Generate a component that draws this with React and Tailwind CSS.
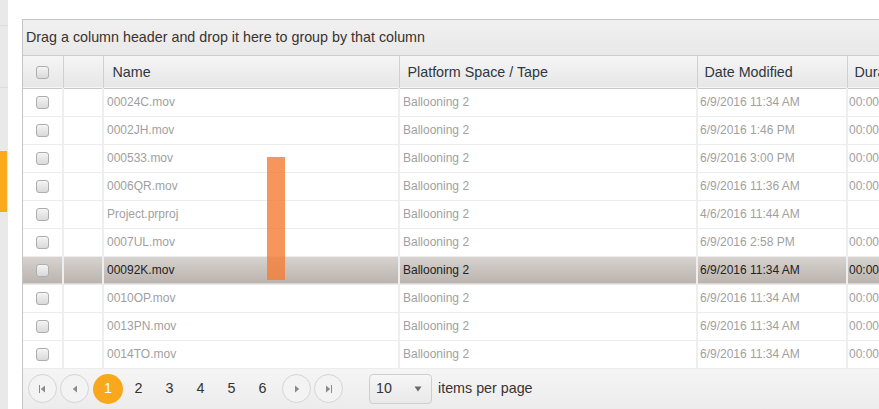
import React from "react";

const rows = [
  { name: "00024C.mov", date: "6/9/2016 11:34 AM", dur: "00:00:12" },
  { name: "0002JH.mov", date: "6/9/2016 1:46 PM", dur: "00:00:15" },
  { name: "000533.mov", date: "6/9/2016 3:00 PM", dur: "00:00:09" },
  { name: "0006QR.mov", date: "6/9/2016 11:36 AM", dur: "00:00:21" },
  { name: "Project.prproj", date: "4/6/2016 11:44 AM", dur: "" },
  { name: "0007UL.mov", date: "6/9/2016 2:58 PM", dur: "00:00:18" },
  { name: "00092K.mov", date: "6/9/2016 11:34 AM", dur: "00:00:11", selected: true },
  { name: "0010OP.mov", date: "6/9/2016 11:34 AM", dur: "00:00:14" },
  { name: "0013PN.mov", date: "6/9/2016 11:34 AM", dur: "00:00:10" },
  { name: "0014TO.mov", date: "6/9/2016 11:34 AM", dur: "00:00:16" },
];

function Check() {
  return (
    <span className="inline-block w-[13px] h-[13px] rounded-[3px] border border-[#aeaeae] bg-gradient-to-b from-[#f4f4f4] to-[#d9d9d9] align-middle" />
  );
}

function PageBtn({ children }) {
  return (
    <button className="w-[29px] h-[29px] rounded-full border border-[#d5d5d5] bg-[#f3f3f3] flex items-center justify-center">
      {children}
    </button>
  );
}

const Tri = ({ dir }) => (
  <svg width="6" height="8" viewBox="0 0 6 8">
    {dir === "l" ? <path d="M5 0.5 L0.8 4 L5 7.5 Z" fill="#8a8a8a" /> : <path d="M1 0.5 L5.2 4 L1 7.5 Z" fill="#8a8a8a" />}
  </svg>
);

const Bar = () => <span className="inline-block w-[1.5px] h-[8px] bg-[#8a8a8a]" />;

export default function App() {
  return (
    <div className="w-[879px] h-[409px] overflow-hidden flex bg-white font-['Liberation_Sans',Arial,sans-serif]">
      <div className="w-[8px] shrink-0 bg-[#e9e9e9] flex flex-col">
        <div className="h-[26px] border-b border-[#dcdcdc]" />
        <div className="h-[62px] border-b border-[#dcdcdc]" />
        <div className="h-[63px]" />
        <div className="h-[61px] w-[7px] bg-[#f9aa1c]" />
      </div>
      <div className="pl-[14px] pt-[19px] shrink-0">
        <div className="relative w-[900px] border border-[#c5c5c5]">
          <div className="h-[36px] border-b border-[#cdcdcd] bg-gradient-to-b from-[#f0f0f0] to-[#e9e9e9] flex items-center pl-[3px] pt-[1px] text-[14.3px] text-[#3a3230]">
            Drag a column header and drop it here to group by that column
          </div>
          <table className="table-fixed border-collapse w-[900px]">
            <colgroup>
              <col className="w-[40px]" />
              <col className="w-[40px]" />
              <col className="w-[296px]" />
              <col className="w-[298px]" />
              <col className="w-[150px]" />
              <col className="w-[76px]" />
            </colgroup>
            <thead>
              <tr className="h-[32px] bg-gradient-to-b from-[#f6f6f6] to-[#e6e6e6] border-b border-[#c8c8c8] text-[14.3px] text-[#2f3640]">
                <th className="border-r border-[#d0d0d0] text-center font-normal"><Check /></th>
                <th className="border-r border-[#d0d0d0] font-normal" />
                <th className="border-r border-[#d0d0d0] text-left font-normal pl-[9px] pt-[1px]">Name</th>
                <th className="border-r border-[#d0d0d0] text-left font-normal pl-[8px] pt-[1px]">Platform Space / Tape</th>
                <th className="border-r border-[#d0d0d0] text-left font-normal pl-[7px] pt-[1px]">Date Modified</th>
                <th className="text-left font-normal pl-[7px] pt-[1px] whitespace-nowrap">Duration</th>
              </tr>
            </thead>
            <tbody>
              {rows.map((r) => (
                <tr
                  key={r.name}
                  className={`h-[28px] border-b border-[#ececec] text-[12px] ${
                    r.selected ? "bg-gradient-to-b from-[#d9d4d1] to-[#bab3ae] text-[#222]" : "text-[#9f9f9f]"
                  }`}
                >
                  <td className="border-r-2 border-[#eeeeee] text-center"><Check /></td>
                  <td className="border-r-2 border-[#eeeeee]" />
                  <td className="border-r-2 border-[#eeeeee] pl-[3px]">{r.name}</td>
                  <td className="border-r-2 border-[#eeeeee] pl-[3px]">Ballooning 2</td>
                  <td className="border-r-2 border-[#eeeeee] pl-[2px]">{r.date}</td>
                  <td className="pl-[1px] whitespace-nowrap">{r.dur}</td>
                </tr>
              ))}
            </tbody>
          </table>
          <div className="h-[40px] bg-gradient-to-b from-[#f5f5f5] to-[#ececec] flex items-center pl-[5px] text-[14.3px] text-[#333]">
            <PageBtn><Bar /><Tri dir="l" /></PageBtn>
            <div className="w-[3px]" />
            <PageBtn><Tri dir="l" /></PageBtn>
            <div className="w-[4px]" />
            <span className="w-[30px] h-[30px] rounded-full bg-[#f8a81c] text-white flex items-center justify-center">1</span>
            <span className="w-[31px] text-center">2</span>
            <span className="w-[31px] text-center">3</span>
            <span className="w-[31px] text-center">4</span>
            <span className="w-[31px] text-center">5</span>
            <span className="w-[31px] text-center">6</span>
            <div className="w-[4px]" />
            <PageBtn><Tri dir="r" /></PageBtn>
            <div className="w-[3px]" />
            <PageBtn><Tri dir="r" /><Bar /></PageBtn>
            <div className="w-[26px]" />
            <div className="w-[63px] h-[30px] rounded-[4px] border border-[#cfcfcf] bg-gradient-to-b from-[#f6f6f6] to-[#e9e9e9] flex items-center justify-between pl-[6px] pr-[9px]">
              <span>10</span>
              <svg width="8" height="6" viewBox="0 0 8 6"><path d="M0.5 0.5 H7.5 L4 5.5 Z" fill="#6a6a6a" /></svg>
            </div>
            <span className="ml-[6px] text-[#3a3230]">items per page</span>
          </div>
          <div className="absolute left-[244px] top-[137px] w-[18px] h-[123px] bg-[rgba(244,124,52,0.8)]" />
        </div>
      </div>
    </div>
  );
}
